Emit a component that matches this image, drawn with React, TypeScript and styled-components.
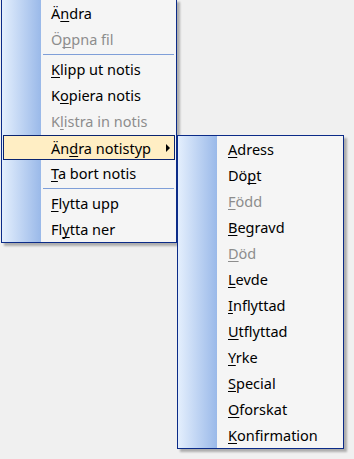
import React from 'react';
import styled, { createGlobalStyle } from 'styled-components';

const GlobalStyle = createGlobalStyle`
  html, body {
    margin: 0;
    padding: 0;
    background: #f0f0f0;
    font-family: "Noto Sans", "Liberation Sans", sans-serif;
  }
`

const Page = styled.div`
  padding-left: 1px;
  margin-top: -1px;
  width: 354px;
  height: 460px;
  box-sizing: border-box;
`

interface MenuProps {
  width: number;
}

const Menu = styled.div<MenuProps>`
  width: ${(p) => p.width}px;
  box-sizing: border-box;
  border: 1px solid #0b2b88;
  background:
    linear-gradient(to right, #e4effd, #9ab9e9) 0 0 / 39px 100% no-repeat,
    #f5f5f5;
  box-shadow: 3px 3px 2px rgba(0, 0, 0, 0.28);
`

const Item = styled.div<{ disabled?: boolean }>`
  display: flex;
  align-items: center;
  height: 26px;
  padding-left: 49px;
  font-size: 14.5px;
  color: ${(p) => (p.disabled ? '#8d8d8d' : '#000')};
  white-space: nowrap;

  u {
    text-decoration-skip-ink: none;
    text-underline-offset: 2px;
  }
`

const Active = styled(Item)`
  height: 25px;
  margin: 1px 1px 0 1px;
  padding-left: 47px;
  border: 1px solid #0a2470;
  background: #ffeec4;
  box-sizing: border-box;
`

const Label = styled.span`
  flex: 1;
`

const Arrow = styled.span`
  width: 0;
  height: 0;
  margin-right: 4px;
  border-left: 4px solid #000;
  border-top: 4px solid transparent;
  border-bottom: 4px solid transparent;
`

const Separator = styled.div`
  height: 4px;
  display: flex;
  align-items: center;
  padding: 0 2px 0 41px;

  &::after {
    content: '';
    flex: 1;
    height: 1px;
    background: #7f9fd8;
  }
`

const SubHost = styled.div`
  position: relative;
`

const SubMenu = styled(Menu)`
  position: absolute;
  left: calc(100% + 1px);
  top: 0;
  z-index: 2;

  ${Item} {
    padding-left: 50px;
  }
`

type Entry = [string, string, string, boolean?];

// [before, mnemonic, after, disabled]
const SUB: Entry[] = [
  ['', 'A', 'dress'],
  ['Dö', 'p', 't'],
  ['', 'F', 'ödd', true],
  ['', 'B', 'egravd'],
  ['', 'D', 'öd', true],
  ['', 'L', 'evde'],
  ['', 'I', 'nflyttad'],
  ['', 'U', 'tflyttad'],
  ['', 'Y', 'rke'],
  ['', 'S', 'pecial'],
  ['', 'O', 'forskat'],
  ['', 'K', 'onfirmation'],
];

const Text = ({ e }: { e: Entry }) => (
  <Label>
    {e[0]}
    <u>{e[1]}</u>
    {e[2]}
  </Label>
);

const Row = ({ e }: { e: Entry }) => (
  <Item disabled={e[3]}>
    <Text e={e} />
  </Item>
);

const App = () => {
  return (
    <Page>
      <GlobalStyle />
      <Menu width={176}>
        <Row e={['Ä', 'n', 'dra']} />
        <Row e={['Ö', 'p', 'pna fil', true]} />
        <Separator />
        <Row e={['', 'K', 'lipp ut notis']} />
        <Row e={['K', 'o', 'piera notis']} />
        <Row e={['K', 'l', 'istra in notis', true]} />
        <SubHost>
          <Active>
            <Text e={['Än', 'd', 'ra notistyp']} />
            <Arrow />
          </Active>
          <SubMenu width={167}>
            {SUB.map((e) => (
              <Row key={e.join('')} e={e} />
            ))}
          </SubMenu>
        </SubHost>
        <Row e={['', 'T', 'a bort notis']} />
        <Separator />
        <Row e={['', 'F', 'lytta upp']} />
        <Row e={['Fl', 'y', 'tta ner']} />
      </Menu>
    </Page>
  );
}

export default App;
